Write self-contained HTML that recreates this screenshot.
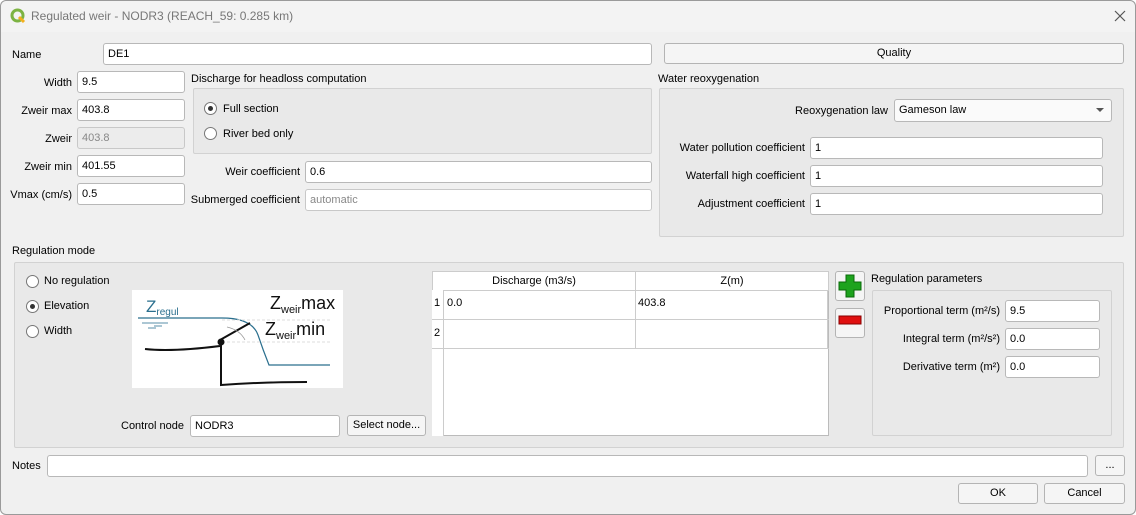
<!DOCTYPE html><html><head><meta charset="utf-8"><style>
*{box-sizing:border-box}
body{margin:0;width:1136px;height:515px;overflow:hidden;font-family:"Liberation Sans",sans-serif;font-size:11px;color:#000;background:#fff}
#win{position:absolute;left:0;top:0;width:1136px;height:515px;background:#f0f0f0;box-shadow:inset 0 0 0 1px #9a9a9a;border-radius:6px;overflow:hidden}
#tb{position:absolute;left:1px;top:1px;width:1134px;height:31px;background:#f3f3f3;border-radius:6px 6px 0 0}
.a{position:absolute}
.l{position:absolute;white-space:nowrap;line-height:13px}
.r{text-align:right}
.in{position:absolute;background:#fff;border:1px solid #b8b8b8;border-radius:3px;padding:3px 0 0 4px;line-height:14px;white-space:nowrap}
.dis{background:#ececec;color:#888;border-color:#c8c8c8}
.btn{position:absolute;background:#f5f5f5;border:1px solid #b4b4b4;border-radius:3px;text-align:center;line-height:19px}
.grp{position:absolute;background:#e9e9e9;border:1px solid #d2d2d2;border-radius:2px}
.rad{position:absolute;width:13px;height:13px;border:1px solid #777;border-radius:50%;background:#fff}
.rad.on::after{content:"";position:absolute;left:3px;top:3px;width:5px;height:5px;border-radius:50%;background:#333}
</style></head><body><div id="win">
<div id="tb"></div>
<svg class="a" style="left:10px;top:8px" width="16" height="16" viewBox="0 0 16 16"><circle cx="7.5" cy="7.5" r="5.5" fill="none" stroke="#7cb342" stroke-width="3"/><path d="M9 9 L14 14" stroke="#f2b01e" stroke-width="3"/></svg>
<div class="l" style="left:31px;top:10px;font-size:12px;color:#777">Regulated weir - NODR3 (REACH_59: 0.285 km)</div>
<svg class="a" style="left:1114px;top:10px" width="12" height="12"><path d="M1 1L11 11M11 1L1 11" stroke="#555" stroke-width="1.2"/></svg>

<div class="l" style="left:12px;top:49px">Name</div>
<div class="in" style="left:103px;top:43px;width:549px;height:22px">DE1</div>
<div class="btn" style="left:664px;top:43px;width:460px;height:21px">Quality</div>

<div class="l r" style="left:0;width:72px;top:77px">Width</div>
<div class="in" style="left:77px;top:71px;width:108px;height:22px">9.5</div>
<div class="l r" style="left:0;width:72px;top:105px">Zweir max</div>
<div class="in" style="left:77px;top:99px;width:108px;height:22px">403.8</div>
<div class="l r" style="left:0;width:72px;top:133px">Zweir</div>
<div class="in dis" style="left:77px;top:127px;width:108px;height:22px">403.8</div>
<div class="l r" style="left:0;width:72px;top:161px">Zweir min</div>
<div class="in" style="left:77px;top:155px;width:108px;height:22px">401.55</div>
<div class="l r" style="left:0;width:72px;top:189px">Vmax (cm/s)</div>
<div class="in" style="left:77px;top:183px;width:108px;height:22px">0.5</div>

<div class="l" style="left:191px;top:73px">Discharge for headloss computation</div>
<div class="grp" style="left:193px;top:88px;width:459px;height:66px"></div>
<div class="rad on" style="left:204px;top:102px"></div><div class="l" style="left:223px;top:103px">Full section</div>
<div class="rad" style="left:204px;top:127px"></div><div class="l" style="left:223px;top:128px">River bed only</div>
<div class="l r" style="left:180px;width:120px;top:166px">Weir coefficient</div>
<div class="in" style="left:305px;top:161px;width:347px;height:22px">0.6</div>
<div class="l r" style="left:180px;width:120px;top:194px">Submerged coefficient</div>
<div class="in dis" style="left:305px;top:189px;width:347px;height:22px;background:#fff">automatic</div>

<div class="l" style="left:658px;top:73px">Water reoxygenation</div>
<div class="grp" style="left:659px;top:88px;width:465px;height:149px"></div>
<div class="l r" style="left:700px;width:188px;top:105px">Reoxygenation law</div>
<div class="in" style="left:894px;top:99px;width:218px;height:23px;background:#fafafa">Gameson law</div>
<div class="a" style="left:1096px;top:108px;border-left:4px solid transparent;border-right:4px solid transparent;border-top:4px solid #555"></div>
<div class="l r" style="left:660px;width:145px;top:142px">Water pollution coefficient</div>
<div class="in" style="left:810px;top:137px;width:293px;height:22px">1</div>
<div class="l r" style="left:660px;width:145px;top:170px">Waterfall high coefficient</div>
<div class="in" style="left:810px;top:165px;width:293px;height:22px">1</div>
<div class="l r" style="left:660px;width:145px;top:198px">Adjustment coefficient</div>
<div class="in" style="left:810px;top:193px;width:293px;height:22px">1</div>

<div class="l" style="left:12px;top:245px">Regulation mode</div>
<div class="grp" style="left:14px;top:262px;width:1110px;height:186px"></div>
<div class="rad" style="left:26px;top:275px"></div><div class="l" style="left:44px;top:275px">No regulation</div>
<div class="rad on" style="left:26px;top:300px"></div><div class="l" style="left:44px;top:300px">Elevation</div>
<div class="rad" style="left:26px;top:325px"></div><div class="l" style="left:44px;top:325px">Width</div>

<svg class="a" style="left:132px;top:290px" width="211" height="98" viewBox="0 0 211 98">
<rect width="211" height="98" fill="#fff"/>
<text x="14" y="22" font-family="Liberation Sans" font-size="17" fill="#2a6f8e">Z<tspan font-size="10" dy="3">regul</tspan></text>
<text x="138" y="19" font-family="Liberation Sans" font-size="18" fill="#111">Z<tspan font-size="11" dy="4">weir</tspan><tspan dy="-4">max</tspan></text>
<text x="133" y="45" font-family="Liberation Sans" font-size="18" fill="#111">Z<tspan font-size="11" dy="4">weir</tspan><tspan dy="-4">min</tspan></text>
<path d="M6 28 H90 Q120 28 126 45 Q131 60 137 75 H198" fill="none" stroke="#2a6f8e" stroke-width="1.2"/>
<path d="M10 33 H36 M22 36 H30 M16 38 H24" stroke="#5a8fa8" stroke-width="1"/>
<path d="M90 30 H200 M90 52 H200" stroke="#ddd" stroke-dasharray="3 2"/>
<path d="M88 50 L118 33 M13 59 Q40 62 88 56" fill="none" stroke="#111" stroke-width="2"/>
<circle cx="89" cy="52" r="3.5" fill="#111"/>
<path d="M89 52 V95 Q130 92 175 92" fill="none" stroke="#111" stroke-width="2"/>
<path d="M95 37 Q108 40 113 50" fill="none" stroke="#999" stroke-width="0.8"/>
</svg>

<div class="l r" style="left:100px;width:84px;top:420px">Control node</div>
<div class="in" style="left:190px;top:415px;width:150px;height:22px">NODR3</div>
<div class="btn" style="left:347px;top:415px;width:79px;height:21px">Select node...</div>

<div class="a" style="left:432px;top:271px;width:397px;height:165px;background:#fff;border:1px solid #bbb"></div>
<div class="a" style="left:432px;top:271px;width:204px;height:20px;border:1px solid #ccc;background:#fff;text-align:center;line-height:18px">Discharge (m3/s)</div>
<div class="a" style="left:635px;top:271px;width:194px;height:20px;border:1px solid #ccc;background:#fff;text-align:center;line-height:18px">Z(m)</div>
<div class="a" style="left:432px;top:290px;width:12px;height:146px;background:#fff;border-right:1px solid #ccc"></div>
<div class="a" style="left:432px;top:319px;width:397px;border-top:1px solid #ccc"></div>
<div class="a" style="left:432px;top:348px;width:397px;border-top:1px solid #ccc"></div>
<div class="a" style="left:635px;top:290px;height:58px;border-left:1px solid #ccc"></div>
<div class="a" style="left:827px;top:290px;height:58px;border-left:1px solid #ccc"></div>
<div class="l" style="left:434px;top:297px">1</div><div class="l" style="left:447px;top:297px">0.0</div><div class="l" style="left:638px;top:297px">403.8</div>
<div class="l" style="left:434px;top:327px">2</div>

<div class="btn" style="left:835px;top:271px;width:30px;height:30px"></div>
<svg class="a" style="left:838px;top:274px" width="24" height="24"><path d="M8 1H16V8H23V16H16V23H8V16H1V8H8Z" fill="#1ea31e" stroke="#0a6a0a"/></svg>
<div class="btn" style="left:835px;top:308px;width:30px;height:30px"></div>
<svg class="a" style="left:838px;top:315px" width="24" height="10"><rect x="1" y="1" width="22" height="8" fill="#e01010" stroke="#800"/></svg>

<div class="l" style="left:871px;top:273px">Regulation parameters</div>
<div class="grp" style="left:872px;top:290px;width:240px;height:146px"></div>
<div class="l r" style="left:872px;width:128px;top:305px">Proportional term (m²/s)</div>
<div class="in" style="left:1005px;top:300px;width:95px;height:22px">9.5</div>
<div class="l r" style="left:872px;width:128px;top:333px">Integral term (m²/s²)</div>
<div class="in" style="left:1005px;top:328px;width:95px;height:22px">0.0</div>
<div class="l r" style="left:872px;width:128px;top:361px">Derivative term (m²)</div>
<div class="in" style="left:1005px;top:356px;width:95px;height:22px">0.0</div>

<div class="l" style="left:12px;top:460px">Notes</div>
<div class="in" style="left:47px;top:455px;width:1041px;height:22px"></div>
<div class="btn" style="left:1095px;top:455px;width:30px;height:21px">...</div>
<div class="btn" style="left:958px;top:483px;width:80px;height:21px">OK</div>
<div class="btn" style="left:1044px;top:483px;width:81px;height:21px">Cancel</div>
</div></body></html>
